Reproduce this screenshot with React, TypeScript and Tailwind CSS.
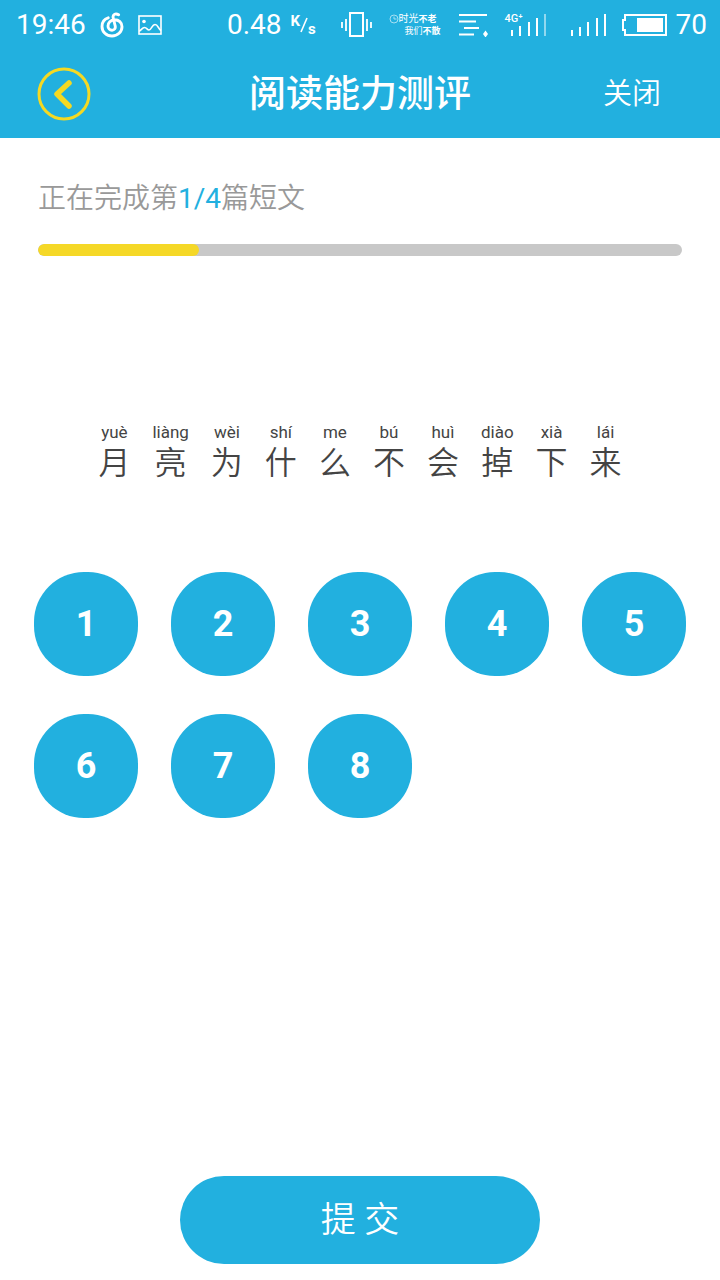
import React from "react";

const CJK = "font-['Roboto','Noto_Sans_CJK_SC',sans-serif]";

const syllables = [
  { pinyin: "yuè", hanzi: "月" },
  { pinyin: "liàng", hanzi: "亮" },
  { pinyin: "wèi", hanzi: "为" },
  { pinyin: "shí", hanzi: "什" },
  { pinyin: "me", hanzi: "么" },
  { pinyin: "bú", hanzi: "不" },
  { pinyin: "huì", hanzi: "会" },
  { pinyin: "diào", hanzi: "掉" },
  { pinyin: "xià", hanzi: "下" },
  { pinyin: "lái", hanzi: "来" },
];

const questions = [1, 2, 3, 4, 5, 6, 7, 8];

function MusicIcon() {
  return (
    <svg width="24" height="26" viewBox="0 0 24 26" fill="none" stroke="currentColor" strokeWidth="2.9" strokeLinecap="round" aria-hidden="true">
      <path d="M8.2 5.8C4.4 7 2 10.4 2 14.4C2 19.8 6.4 24 12 24C17.6 24 22 19.8 22 14.8C22 10.6 18.8 7.600 14.4 7.700C10.600 7.900 8 11 8 14C8 16.600 9.800 18.200 12 18.200C14.400 18.200 15.700 16.400 15.200 14L13.200 6C12.400 2.600 15.400 0.800 18.600 2.800" />
    </svg>
  );
}

function PictureIcon() {
  return (
    <svg width="24" height="20" viewBox="0 0 24 20" fill="none" stroke="currentColor" strokeWidth="1.6" aria-hidden="true">
      <rect x="1" y="1" width="22" height="18" />
      <circle cx="6" cy="6.5" r="1.8" fill="currentColor" stroke="none" />
      <path d="M1 16C3 16 4 12.5 6.5 12.5C9 12.5 9 15 11 15C13.5 15 14 9.5 17 9.5C20 9.5 20 13.5 23 15.5" />
    </svg>
  );
}

function VibrateIcon() {
  return (
    <svg width="32" height="26" viewBox="0 0 32 26" fill="none" stroke="currentColor" strokeWidth="2" aria-hidden="true">
      <rect x="9" y="1" width="13" height="23" />
      <path d="M5 7V19M26 7V19M1 10V16M30 10V16" strokeWidth="1.8" />
    </svg>
  );
}

function ListIcon() {
  return (
    <svg width="30" height="24" viewBox="0 0 30 24" fill="none" stroke="currentColor" strokeWidth="2" aria-hidden="true">
      <path d="M0 2H28M0 8.500H17M5 15H20M0 21.500H15" />
      <path d="M26.500 17.500L29 21L26.500 24.500L24 21Z" fill="currentColor" stroke="none" />
    </svg>
  );
}

function SignalIcon() {
  return (
    <svg width="36" height="24" viewBox="0 0 36 24" fill="none" stroke="currentColor" strokeWidth="2" aria-hidden="true">
      <path d="M2 17V23M10 14V23M18 9V23M27 5V23M35 1V23" />
    </svg>
  );
}

function MobileSignal() {
  return (
    <div className="relative h-6 w-[41px]">
      <svg width="41" height="24" viewBox="0 0 41 24" fill="none" stroke="currentColor" strokeWidth="2" aria-hidden="true">
        <path d="M7 17V23M15 13V23M24 9V23M32 5V23" />
        <path d="M40 1V23" opacity="0.5" />
      </svg>
      <span className="absolute left-0 top-0 text-[11px] font-medium leading-[11px]">4G⁺</span>
    </div>
  );
}

function BatteryIcon() {
  return (
    <svg width="46" height="24" viewBox="0 0 46 24" fill="none" stroke="currentColor" strokeWidth="2" aria-hidden="true">
      <path d="M3 2H44V22H3V17H1V7H3Z" />
      <rect x="15" y="5" width="26" height="14" fill="currentColor" stroke="none" />
    </svg>
  );
}

function CarrierName() {
  return (
    <div className="flex w-[52px] flex-col whitespace-nowrap text-[9px] leading-3">
      <div className="flex items-center">
        <svg width="10" height="10" viewBox="0 0 10 10" fill="none" stroke="currentColor" strokeWidth="1" opacity="0.6" aria-hidden="true">
          <circle cx="5" cy="5" r="4" />
          <path d="M5 2.500V5H7.500" />
        </svg>
        <span className="text-[10px] font-normal">时光</span>
        <span className="font-bold">不老</span>
      </div>
      <div className="flex items-center justify-end">
        <span className="font-normal">我们</span>
        <span className="font-bold">不散</span>
      </div>
    </div>
  );
}

function StatusBar() {
  return (
    <div className="flex h-[50px] items-center justify-between pl-4 pr-[13px] text-[28px] font-normal leading-8">
      <div className="flex items-center">
        <span>19:46</span>
        <span className="ml-[14px]"><MusicIcon /></span>
        <span className="ml-[14px]"><PictureIcon /></span>
      </div>
      <div className="flex items-center">
        <span>0.48</span>
        <span className="ml-[9px] flex h-6 w-[26px] text-[15px] font-bold leading-4">
          <span>K</span>
          <svg className="mt-1" width="8" height="16" viewBox="0 0 8 16" stroke="currentColor" strokeWidth="1.6" aria-hidden="true">
            <path d="M7 1L1 15" />
          </svg>
          <span className="self-end">s</span>
        </span>
        <span className="ml-6"><VibrateIcon /></span>
        <span className="ml-4"><CarrierName /></span>
        <span className="ml-[18px]"><ListIcon /></span>
        <span className="ml-4"><MobileSignal /></span>
        <span className="ml-6"><SignalIcon /></span>
        <span className="ml-4"><BatteryIcon /></span>
        <span className="ml-2">70</span>
      </div>
    </div>
  );
}

export default function App() {
  return (
    <div className={`flex min-h-screen flex-col bg-white ${CJK}`} lang="zh-CN">
      <header className="bg-[#22b0df] text-white">
        <StatusBar />
        <nav className="grid h-[88px] grid-cols-[1fr_auto_1fr] items-center px-[37px]">
          <button type="button" aria-label="返回" className="justify-self-start text-[#f5d922]">
            <svg width="54" height="54" viewBox="0 0 54 54" fill="none" stroke="currentColor" aria-hidden="true">
              <circle cx="27" cy="27" r="25" strokeWidth="3" />
              <path d="M32 16L20 27L32 39" strokeWidth="5.500" strokeLinecap="round" strokeLinejoin="round" />
            </svg>
          </button>
          <h1 className="pt-0.5 text-[37px] font-medium leading-[54px]">阅读能力测评</h1>
          <button type="button" className="justify-self-end pr-[22px] text-[29px] font-[350] leading-[44px]">关闭</button>
        </nav>
      </header>

      <main className="flex flex-1 flex-col pb-4 pt-10">
        <section className="px-[38px]">
          <p id="progress-label" className="text-[28px] font-[350] leading-[42px] text-[#999]">
            正在完成第<span className="font-normal text-[#22b0df]">1/4</span>篇短文
          </p>
          <div role="progressbar" aria-labelledby="progress-label" aria-valuemin={0} aria-valuemax={4} aria-valuenow={1} className="mt-6 h-3 overflow-hidden rounded-full bg-[#c8c8c8]">
            <div className="h-full w-1/4 rounded-full bg-[#f5d827]" />
          </div>
        </section>

        <p className="mt-[166px] flex justify-center gap-[22px] text-[#444]">
          {syllables.map(({ pinyin, hanzi }) => (
            <span key={hanzi} className="flex min-w-8 flex-col items-center">
              <span className="text-[17px] font-normal leading-5">{pinyin}</span>
              <span className="pt-px text-[32px] font-[350] leading-10">{hanzi}</span>
            </span>
          ))}
        </p>

        <div className="mt-[89px] grid grid-cols-[repeat(5,104px)] justify-between gap-y-[38px] px-[34px]">
          {questions.map((n) => (
            <button key={n} type="button" className="h-[104px] rounded-[50px] bg-[#22b0df] text-[36px] font-bold leading-10 text-white">
              {n}
            </button>
          ))}
        </div>

        <button type="button" className="mx-auto mt-auto h-[88px] w-1/2 rounded-full bg-[#22b0df] pt-0.5 text-[35px] font-[350] leading-[52px] text-white">
          提 交
        </button>
      </main>
    </div>
  );
}
